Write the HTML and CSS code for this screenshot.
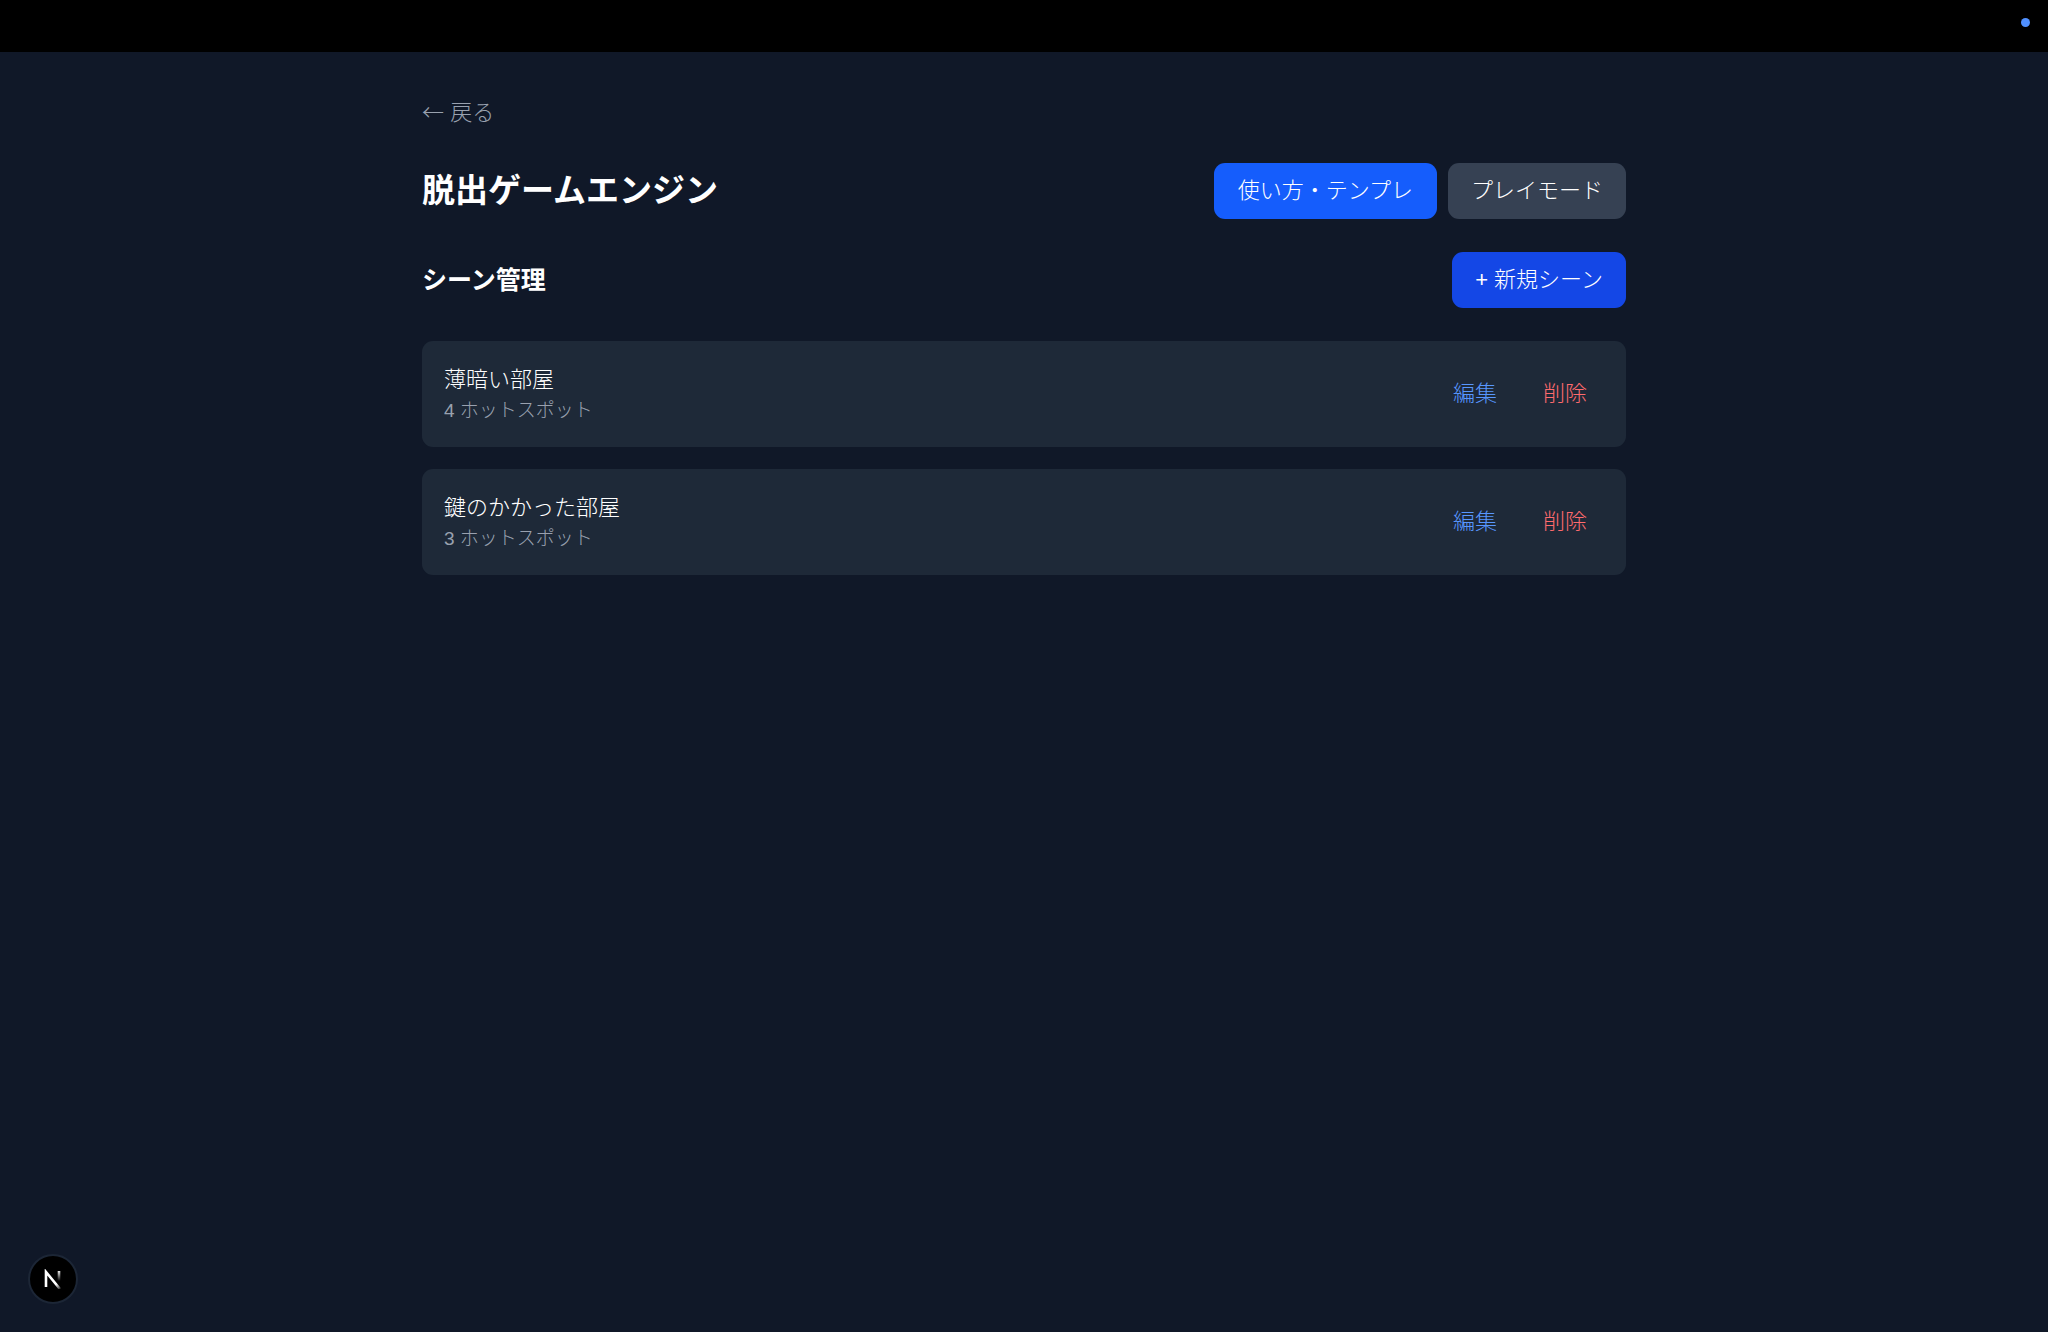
FILE: index.html
```html
<!DOCTYPE html>
<html lang="ja">
<head>
<meta charset="utf-8">
<meta name="viewport" content="width=device-width, initial-scale=1">
<title>脱出ゲームエンジン</title>
<link rel="stylesheet" href="styles.css">
</head>
<body>

  <div class="topbar"><span class="dot"></span></div>

  <main class="container">
    <a class="back" href="#"><span class="arrow">←</span> 戻る</a>

    <header class="row">
      <h1>脱出ゲームエンジン</h1>
      <div class="actions">
        <button class="btn btn-help" type="button">使い方・テンプレ</button>
        <button class="btn btn-play" type="button">プレイモード</button>
      </div>
    </header>

    <section class="scenes">
      <div class="row">
        <h2>シーン管理</h2>
        <button class="btn btn-new" type="button">+ 新規シーン</button>
      </div>

      <ul class="scene-list">
        <li class="scene">
          <div>
            <h3>薄暗い部屋</h3>
            <p>4 ホットスポット</p>
          </div>
          <div class="scene-actions">
            <button class="edit" type="button">編集</button>
            <button class="delete" type="button">削除</button>
          </div>
        </li>
        <li class="scene">
          <div>
            <h3>鍵のかかった部屋</h3>
            <p>3 ホットスポット</p>
          </div>
          <div class="scene-actions">
            <button class="edit" type="button">編集</button>
            <button class="delete" type="button">削除</button>
          </div>
        </li>
      </ul>
    </section>
  </main>

  <!-- Dev tools badge -->
  <button class="badge" type="button" aria-label="Dev Tools">
    <svg width="18" height="20" viewBox="0 0 18 20" fill="none">
      <defs>
        <linearGradient id="diagonal" x1="9" y1="10" x2="17" y2="19" gradientUnits="userSpaceOnUse">
          <stop offset="0.5" stop-color="#fff"/>
          <stop offset="1" stop-color="#fff" stop-opacity="0.2"/>
        </linearGradient>
        <linearGradient id="stem" x1="15" y1="1" x2="15" y2="12" gradientUnits="userSpaceOnUse">
          <stop stop-color="#fff"/>
          <stop offset="1" stop-color="#fff" stop-opacity="0"/>
        </linearGradient>
      </defs>
      <path d="M2 18V3L16 20" stroke="url(#diagonal)" stroke-width="2.6"/>
      <path d="M15 2V13" stroke="url(#stem)" stroke-width="2.6"/>
    </svg>
  </button>

</body>
</html>
```

FILE: styles.css
```css
* {box-sizing: border-box}

body {
  margin: 0;
  min-height: 100vh;
  background-color: #101828;
  color: #fff;
  font-family: "Liberation Sans", "Noto Sans CJK JP", sans-serif;
  font-size: 22px;
  font-weight: 300;
  line-height: 34px;
}

h1, h2, h3, p, ul {
  margin: 0;
  padding: 0;
}

button {
  border: none;
  background: none;
  font: inherit;
  color: inherit;
  cursor: pointer;
}

/* Black strip above the page */
.topbar {
  display: flex;
  justify-content: flex-end;
  height: 52px;
  padding: 18px 18px 0 0;
  background-color: #000;
}

.dot {
  width: 9px;
  height: 9px;
  border-radius: 50%;
  background-color: #5090ff;
}

.container {
  max-width: 1248px;
  margin: 0 auto;
  padding: 44px 22px;
}

.back {
  display: block;
  width: fit-content;
  margin-bottom: 33px;
  color: #99a1af;
  text-decoration: none;
}

.arrow {
  font-family: "Noto Sans CJK JP", sans-serif;
  line-height: 1;
}

.row {
  display: flex;
  align-items: center;
  justify-content: space-between;
  margin-bottom: 33px;
}

h1 {
  font-size: 33px;
  font-weight: 700;
}

h2 {
  font-size: 25px;
  font-weight: 700;
}

.actions {
  display: flex;
  gap: 11px;
}

.btn {
  height: 56px;
  padding: 0 23px;
  border-radius: 11px;
}

.btn-help {
  padding: 0 24px;
  background-color: #155dfc;
}
.btn-play {background-color: #364153;}
.btn-new {background-color: #1447e6;}

/* Scene cards */
.scene-list {
  display: flex;
  flex-direction: column;
  gap: 22px;
  list-style: none;
}

.scene {
  display: flex;
  align-items: center;
  justify-content: space-between;
  padding: 22px;
  border-radius: 11px;
  background-color: #1e2938;
}

.scene h3 {
  font-size: 22px;
  font-weight: 300;
}

.scene p {
  color: #99a1af;
  font-size: 19px;
  line-height: 28px;
}

.scene-actions {
  display: flex;
  gap: 12px;
}

.scene-actions button {
  padding: 6px 17px;
}

.edit {color: #5897ff;}
.delete {color: #ff6b6e;}

.badge {
  position: fixed;
  left: 28px;
  bottom: 28px;
  display: flex;
  align-items: center;
  justify-content: center;
  width: 50px;
  height: 50px;
  padding: 0;
  border: 2px solid #1c2636;
  border-radius: 50%;
  background-color: #000;
}
```
